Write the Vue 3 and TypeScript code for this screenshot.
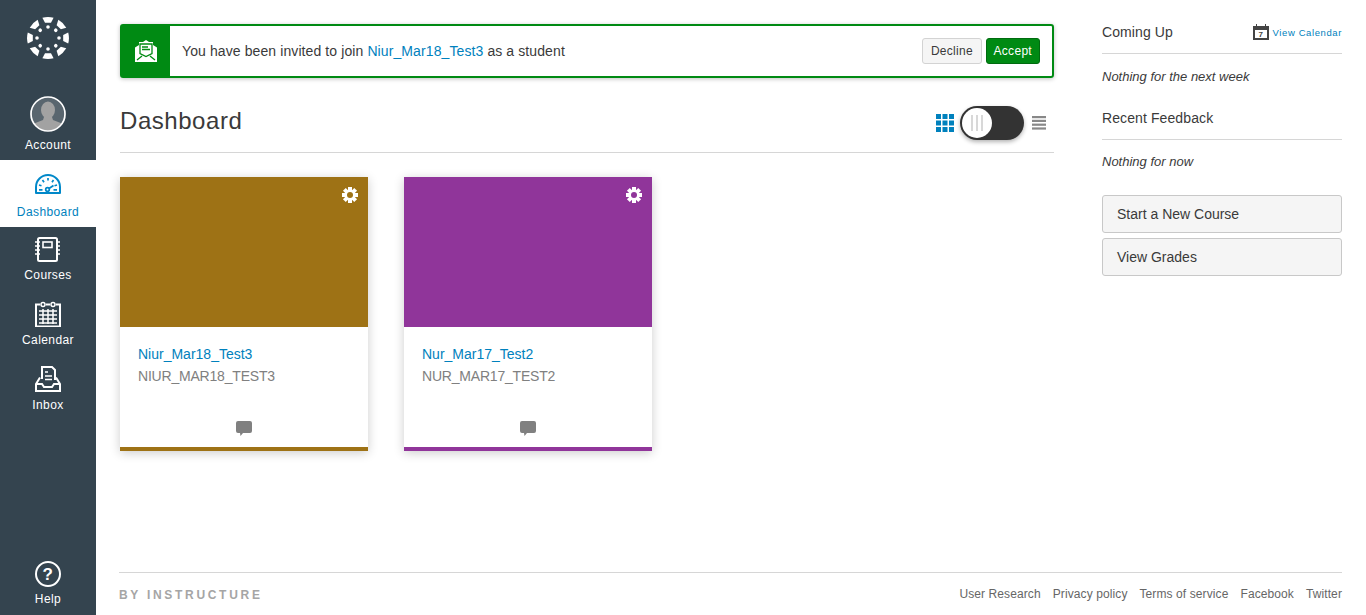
<template>
  <div class="app">
    <nav class="sidebar">
      <svg class="logo" width="42" height="42" viewBox="-21 -21 42 42">
        <g v-for="a in logoAngles" :key="a" :transform="`rotate(${a})`" fill="#fff">
          <path d="M-5.6 -20.2A21 21 0 0 1 5.6 -20.2L3 -15.2H-3Z" />
          <circle cx="0" cy="-11" r="1.8" />
        </g>
      </svg>

      <a class="nav-item account">
        <svg width="36" height="36" viewBox="0 0 36 36">
          <defs>
            <clipPath id="avatar-clip"><circle cx="18" cy="18" r="16.5" /></clipPath>
          </defs>
          <circle cx="18" cy="18" r="17" fill="#59666f" />
          <g clip-path="url(#avatar-clip)" fill="#a2a2a2">
            <ellipse cx="18" cy="14" rx="7" ry="8.6" />
            <path d="M14 21h8l1 3 9 3.5 2 9H2l2-9 9-3.500z" />
          </g>
          <circle cx="18" cy="18" r="17" fill="none" stroke="#fff" stroke-width="1.700" />
        </svg>
        <span>Account</span>
      </a>

      <a class="nav-item active">
        <svg width="26" height="26" viewBox="0 0 26 26" fill="none" stroke="#0088c9" stroke-width="2">
          <path d="M1 22V16A12 12 0 0 1 25 16V22Z" stroke-linejoin="round" />
          <path stroke-width="1.700" d="M13 7v2.500M7.500 9l1.500 2.200M4 14l2.500.8M18.500 9l-1.500 2.200M22 14l-2.500.8M4 18.800h3.500M18.500 18.800H22M14 17.500l4.500-3" />
          <circle cx="12.500" cy="18.500" r="1.800" stroke-width="1.700" />
        </svg>
        <span>Dashboard</span>
      </a>

      <a class="nav-item">
        <svg width="26" height="26" viewBox="0 0 26 26" fill="none" stroke="#fff" stroke-width="2">
          <rect x="3" y="2" width="19" height="23" rx="1.500" />
          <rect x="8" y="6" width="9" height="5.500" stroke-width="1.600" />
          <path d="M0 6h5M0 10h5M0 14h5M0 18h5M21 6h4M21 10h4M21 14h4M21 18h4" stroke-width="1.600" />
        </svg>
        <span>Courses</span>
      </a>

      <a class="nav-item">
        <svg width="26" height="26" viewBox="0 0 26 26" fill="none" stroke="#fff" stroke-width="2">
          <path d="M5 3.500H1v22h24v-22h-4M11 3.500h4" />
          <circle cx="8" cy="3.500" r="2" stroke-width="1.500" />
          <circle cx="18" cy="3.500" r="2" stroke-width="1.500" />
          <path stroke-width="1.500" d="M4 10h18M4 14h18M4 18h18M4 22h18M8 8v15M13 8v15M18 8v15" />
        </svg>
        <span>Calendar</span>
      </a>

      <a class="nav-item">
        <svg width="26" height="26" viewBox="0 0 26 26" fill="none" stroke="#fff" stroke-width="2">
          <path d="M7 13V1h10l3 3v10" />
          <path stroke-width="1.500" d="M10 6h3M10 10h7M10 13.500h7" />
          <path d="M5 11.500 1 18v7h24v-7l-4-6.500" />
          <path d="M1 18h6l2 3h8l2-3h6" />
        </svg>
        <span>Inbox</span>
      </a>

      <a class="nav-item help">
        <svg width="26" height="26" viewBox="0 0 26 26">
          <circle cx="13" cy="13" r="12" fill="none" stroke="#fff" stroke-width="2" />
          <text x="13" y="19" text-anchor="middle" class="help-mark">?</text>
        </svg>
        <span>Help</span>
      </a>
    </nav>

    <div class="page">
      <div class="content">
        <main class="main">
          <div class="invite">
            <div class="invite-icon">
              <svg width="24" height="24" viewBox="0 0 24 24">
                <path fill="#fff" d="M1 8.500 5 6V3h4l3-2 3 2h4v3l4 2.500V23H1z" />
                <path fill="none" stroke="#008a13" stroke-width="1.300" d="M6 5h12v9.500l-6 3-6-3zM8 8h6M8 10.500h8M3 21l5-4M21 21l-5-4" />
              </svg>
            </div>
            <p class="invite-text">You have been invited to join <a>Niur_Mar18_Test3</a> as a student</p>
            <button class="btn-small">Decline</button>
            <button class="btn-small accept">Accept</button>
          </div>

          <header class="dash-header">
            <h1>Dashboard</h1>
            <div class="view-toggle">
              <svg width="18" height="18" viewBox="0 0 18 18" fill="#0081bd">
                <template v-for="y in [0, 6.500, 13]" :key="y">
                  <rect v-for="x in [0, 6.500, 13]" :key="x" :x="x" :y="y" width="5" height="5" />
                </template>
              </svg>
              <div class="switch">
                <div class="knob"><i></i><i></i><i></i></div>
              </div>
              <svg class="list-icon" width="14" height="14" viewBox="0 0 14 14" fill="#888">
                <rect v-for="y in [0, 3.800, 7.600, 11.400]" :key="y" x="0" :y="y" width="14" height="2.200" />
              </svg>
            </div>
          </header>

          <div class="cards">
            <div v-for="c in courses" :key="c.code" class="card" :style="{ borderBottomColor: c.color }">
              <div class="card-hero" :style="{ background: c.color }">
                <svg class="gear" width="16" height="16" viewBox="0 0 16 16">
                  <g fill="#fff">
                    <rect v-for="a in [0, 45, 90, 135]" :key="a" x="6" y="0" width="4" height="16" :transform="`rotate(${a} 8 8)`" />
                  </g>
                  <circle cx="8" cy="8" r="5.200" fill="#fff" />
                  <circle cx="8" cy="8" r="3" :fill="c.color" />
                </svg>
              </div>
              <div class="card-body">
                <a class="card-title">{{ c.name }}</a>
                <div class="card-code">{{ c.code }}</div>
              </div>
              <div class="card-actions">
                <svg width="16" height="16" viewBox="0 0 16 16" fill="#808080">
                  <path d="M2 0h12a2 2 0 0 1 2 2v8a2 2 0 0 1-2 2H7l-2.500 3L4 12H2a2 2 0 0 1-2-2V2a2 2 0 0 1 2-2z" />
                </svg>
              </div>
            </div>
          </div>
        </main>

        <aside class="aside">
          <div class="aside-head">
            <h2>Coming Up</h2>
            <a class="view-cal">
              <svg width="16" height="16" viewBox="0 0 16 16">
                <path fill="#444" d="M0 2h3V0h1v2h8V0h1v2h3v14H0z" />
                <rect x="2" y="6" width="12" height="8" fill="#fff" />
                <text x="8" y="13" text-anchor="middle" class="cal-day">7</text>
              </svg>
              <span>View Calendar</span>
            </a>
          </div>
          <p class="empty">Nothing for the next week</p>
          <div class="aside-head feedback">
            <h2>Recent Feedback</h2>
          </div>
          <p class="empty second">Nothing for now</p>
          <button class="btn-wide first">Start a New Course</button>
          <button class="btn-wide">View Grades</button>
        </aside>
      </div>

      <footer class="footer">
        <span class="brand">BY INSTRUCTURE</span>
        <div class="footer-links">
          <a v-for="l in footerLinks" :key="l">{{ l }}</a>
        </div>
      </footer>
    </div>
  </div>
</template>

<script setup lang="ts">
interface Course {
  name: string
  code: string
  color: string
}

const logoAngles = [0, 45, 90, 135, 180, 225, 270, 315]

const courses: Course[] = [
  { name: 'Niur_Mar18_Test3', code: 'NIUR_MAR18_TEST3', color: '#9e7215' },
  { name: 'Nur_Mar17_Test2', code: 'NUR_MAR17_TEST2', color: '#90359a' }
]

const footerLinks = ['User Research', 'Privacy policy', 'Terms of service', 'Facebook', 'Twitter']
</script>

<style>
html,
body {
  margin: 0;
  background: #fff;
}
</style>

<style scoped>
.app {
  display: flex;
  height: 615px;
  overflow: hidden;
  font-family: "Liberation Sans", Arial, sans-serif;
  color: #3a3a3a;
}

a {
  color: #0081bd;
  text-decoration: none;
}

/* Sidebar */
.sidebar {
  width: 96px;
  flex-shrink: 0;
  display: flex;
  flex-direction: column;
  background: #34444f;
}

.logo {
  display: block;
  margin: 17px auto 31px;
}

.nav-item {
  display: flex;
  flex-direction: column;
  align-items: center;
  gap: 5px;
  height: 65px;
  box-sizing: border-box;
  padding-top: 9px;
  font-size: 12px;
  line-height: 16px;
  letter-spacing: 0.4px;
  color: #fff;
}

.nav-item.account {
  height: 70px;
  padding-top: 6px;
}

.nav-item.active {
  height: 67px;
  padding-top: 11px;
  gap: 7px;
  background: #fff;
  color: #0081bd;
}

.nav-item.help {
  margin-top: auto;
  height: 62px;
  padding-top: 8px;
  gap: 4px;
}

.help-mark {
  font: bold 17px "Liberation Sans", Arial, sans-serif;
  fill: #fff;
}

/* Main column */
.page {
  flex: 1;
  min-width: 0;
  display: flex;
  flex-direction: column;
  padding: 24px 24px 0;
}

.content {
  flex: 1;
  display: flex;
  gap: 48px;
}

.main {
  width: 934px;
  flex-shrink: 0;
}

.invite {
  display: flex;
  align-items: center;
  gap: 4px;
  height: 54px;
  box-sizing: border-box;
  padding-right: 12px;
  border: 2px solid #008a13;
  border-radius: 3px;
  box-shadow: 0 1px 4px rgba(0, 0, 0, 0.25);
}

.invite-icon {
  align-self: stretch;
  width: 48px;
  display: flex;
  align-items: center;
  justify-content: center;
  background: #008a13;
}

.invite-text {
  flex: 1;
  margin: 0 0 0 8px;
  font-size: 14px;
  letter-spacing: 0.1px;
}

.btn-small {
  height: 26px;
  padding: 0 7.5px;
  border: 1px solid #d3d3d3;
  border-radius: 3px;
  background: #f5f5f5;
  font: 12px "Liberation Sans", Arial, sans-serif;
  letter-spacing: 0.3px;
  color: #3a3a3a;
}

.btn-small.accept {
  padding: 0 7px;
  background: #008a13;
  border-color: #006b0f;
  color: #fff;
}

.dash-header {
  display: flex;
  align-items: flex-start;
  justify-content: space-between;
  height: 75px;
  box-sizing: border-box;
  margin-bottom: 24px;
  border-bottom: 1px solid #d6d6d6;
}

h1 {
  margin: 28px 0 0;
  font-size: 24px;
  font-weight: 400;
  line-height: 30px;
  letter-spacing: 0.55px;
}

.view-toggle {
  display: flex;
  align-items: center;
  gap: 6px;
  margin: 28px 8px 0 0;
}

.list-icon {
  margin-left: 2px;
}

.switch {
  width: 64px;
  height: 34px;
  box-sizing: border-box;
  padding: 2px;
  border-radius: 17px;
  background: #333;
  box-shadow: 0 2px 4px rgba(0, 0, 0, 0.3);
}

.knob {
  width: 30px;
  height: 30px;
  display: flex;
  align-items: center;
  justify-content: center;
  gap: 3px;
  border-radius: 50%;
  background: #fff;
}

.knob i {
  width: 2px;
  height: 16px;
  background: #d8d8d8;
}

.cards {
  display: flex;
  gap: 36px;
}

.card {
  width: 248px;
  height: 274px;
  display: flex;
  flex-direction: column;
  box-sizing: border-box;
  border-bottom: 4px solid;
  box-shadow: 0 2px 10px rgba(0, 0, 0, 0.2);
}

.card-hero {
  height: 150px;
  display: flex;
  justify-content: flex-end;
  padding: 10px;
  box-sizing: border-box;
}

.card-body {
  flex: 1;
  padding: 18px 18px 0;
}

.card-title {
  display: block;
  font-size: 14px;
  line-height: 18px;
}

.card-code {
  margin-top: 5px;
  font-size: 14px;
  line-height: 16px;
  letter-spacing: -0.2px;
  color: #808080;
}

.card-actions {
  display: flex;
  justify-content: center;
  height: 26px;
}

/* Right column */
.aside {
  width: 240px;
  flex-shrink: 0;
}

.aside-head {
  display: flex;
  align-items: flex-start;
  justify-content: space-between;
  height: 17px;
  padding-bottom: 12px;
  border-bottom: 1px solid #d6d6d6;
}

.aside-head.feedback {
  margin-top: 25px;
}

h2 {
  margin: 0;
  font-size: 14px;
  font-weight: 400;
  line-height: 16px;
  letter-spacing: 0.1px;
}

.view-cal {
  display: flex;
  align-items: center;
  gap: 4px;
  font-size: 9.500px;
  letter-spacing: 0.6px;
}

.empty {
  margin: 15px 0 0;
  font-size: 13px;
  line-height: 16px;
  font-style: italic;
}

.empty.second {
  margin-top: 14px;
}

.cal-day {
  font: bold 8px "Liberation Sans", Arial, sans-serif;
  fill: #444;
}

.btn-wide {
  display: block;
  width: 100%;
  height: 38px;
  margin-top: 5px;
  padding: 0 14px;
  text-align: left;
  border: 1px solid #c8c8c8;
  border-radius: 3px;
  background: #f5f5f5;
  font: 14px "Liberation Sans", Arial, sans-serif;
  color: #3a3a3a;
}

.btn-wide.first {
  margin-top: 25px;
}

/* Footer */
.footer {
  display: flex;
  align-items: center;
  justify-content: space-between;
  height: 43px;
  box-sizing: border-box;
  margin-left: -1px;
  border-top: 1px solid #d6d6d6;
}

.brand {
  padding-top: 2px;
  font-size: 12px;
  font-weight: 700;
  letter-spacing: 2.700px;
  color: #a5a5a5;
}

.footer-links {
  display: flex;
  gap: 12px;
  font-size: 12px;
  letter-spacing: 0.1px;
}

.footer-links a {
  color: #666;
}
</style>
